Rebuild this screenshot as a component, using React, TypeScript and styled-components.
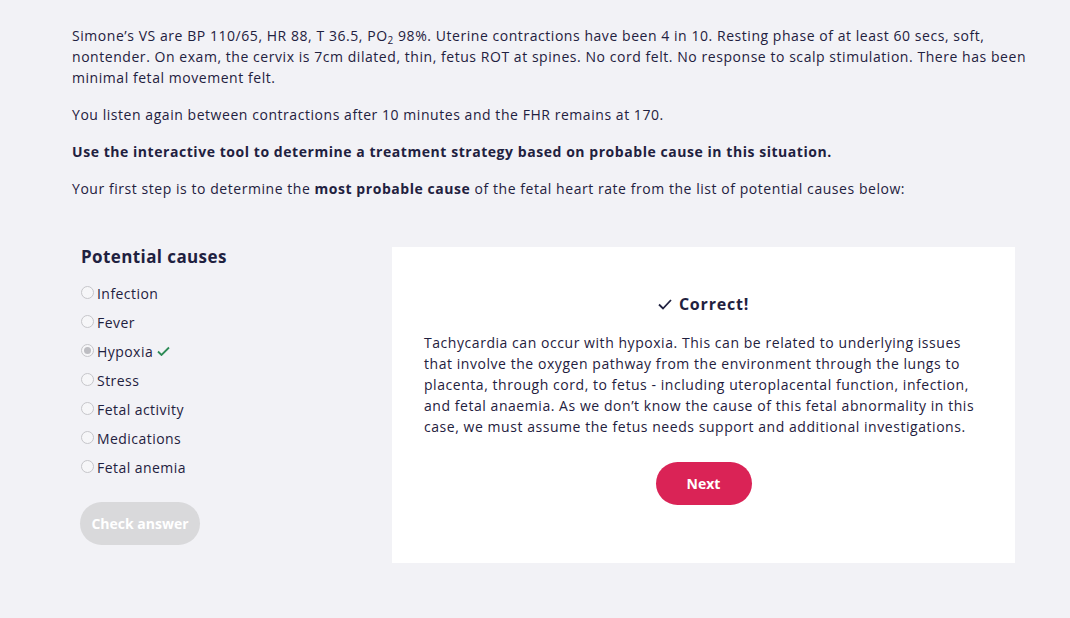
import React from "react";
import styled, { createGlobalStyle } from "styled-components";

const Global = createGlobalStyle`
  html, body { margin: 0; padding: 0; background: #f2f2f6; }
  body { font-family: "Open Sans", "Liberation Sans", sans-serif; color: #1f2140; }
`;

const Page = styled.div`
  width: 1070px;
  height: 618px;
  box-sizing: border-box;
  padding: 25px 40px 0 72px;
  background: #f2f2f6;
`;

const P = styled.p<{ $bold?: boolean }>`
  margin: 0 0 16px;
  font-size: 14px;
  line-height: 21px;
  font-weight: ${(p) => (p.$bold ? 700 : 400)};
  letter-spacing: 0.55px;
`;

const Sub = styled.span`
  display: inline-block;
  font-size: 10px;
  line-height: 10px;
  vertical-align: -3px;
`;

const Tool = styled.div`
  display: flex;
  margin-top: 46px;
`;

const Left = styled.div`
  width: 320px;
  padding: 0 0 0 9px;
  box-sizing: border-box;
`;

const Heading = styled.h3`
  margin: 0 0 10px;
  font-size: 17px;
  line-height: 24px;
  font-weight: 700;
  letter-spacing: 0.4px;
`;

const Option = styled.label`
  display: flex;
  align-items: center;
  height: 29px;
  font-size: 14px;
  letter-spacing: 0.45px;
`;

const Radio = styled.span<{ $checked?: boolean }>`
  width: 11px;
  height: 11px;
  border: 1px solid #c6c6ca;
  border-radius: 50%;
  background: #f6f6f8;
  margin-right: 3px;
  margin-top: -3px;
  display: flex;
  align-items: center;
  justify-content: center;
  &::after {
    content: "";
    display: ${(p) => (p.$checked ? "block" : "none")};
    width: 7px;
    height: 7px;
    border-radius: 50%;
    background: #bdbdc2;
  }
`;

const Tick = styled.svg`
  margin-left: 4px;
  margin-top: -2px;
`;

const CheckButton = styled.button`
  margin-top: 20px;
  width: 120px;
  height: 43px;
  border: none;
  border-radius: 22px;
  background: #d9d9db;
  color: #fff;
  font-family: inherit;
  font-weight: 700;
  font-size: 14px;
  margin-left: -1px;
`;

const Panel = styled.div`
  width: 623px;
  height: 316px;
  margin-top: 2px;
  background: #fff;
  box-sizing: border-box;
  padding: 45px 32px 0 32px;
  display: flex;
  flex-direction: column;
  align-items: center;
`;

const PanelTitle = styled.div`
  display: flex;
  align-items: center;
  gap: 7px;
  font-size: 16px;
  font-weight: 700;
  line-height: 24px;
  letter-spacing: 0.8px;
  margin-bottom: 16px;
`;

const PanelText = styled.p`
  margin: 0;
  font-size: 14px;
  line-height: 21px;
  letter-spacing: 0.55px;
  align-self: stretch;
`;

const NextButton = styled.button`
  margin-top: 25px;
  width: 96px;
  height: 43px;
  border: none;
  border-radius: 22px;
  background: #da2356;
  color: #fff;
  font-family: inherit;
  font-weight: 700;
  font-size: 14px;
`;

const causes = [
  "Infection",
  "Fever",
  "Hypoxia",
  "Stress",
  "Fetal activity",
  "Medications",
  "Fetal anemia",
];

export default function App() {
  return (
    <Page>
      <Global />
      <P>
        Simone’s VS are BP 110/65, HR 88, T 36.5, PO<Sub>2</Sub> 98%. Uterine contractions have been 4 in 10. Resting
        phase of at least 60 secs, soft, nontender. On exam, the cervix is 7cm dilated, thin, fetus ROT at spines. No
        cord felt. No response to scalp stimulation. There has been minimal fetal movement felt.
      </P>
      <P>You listen again between contractions after 10 minutes and the FHR remains at 170.</P>
      <P $bold>Use the interactive tool to determine a treatment strategy based on probable cause in this situation.</P>
      <P>
        Your first step is to determine the <b>most probable cause</b> of the fetal heart rate from the list of potential
        causes below:
      </P>
      <Tool>
        <Left>
          <Heading>Potential causes</Heading>
          {causes.map((c) => (
            <Option key={c}>
              <Radio $checked={c === "Hypoxia"} />
              {c}
              {c === "Hypoxia" && (
                <Tick width="13" height="10" viewBox="0 0 13 10">
                  <path d="M1 5.5 L4.5 9 L12 1.5" fill="none" stroke="#2e8b57" strokeWidth="1.8" />
                </Tick>
              )}
            </Option>
          ))}
          <CheckButton disabled>Check answer</CheckButton>
        </Left>
        <Panel>
          <PanelTitle>
            <svg width="14" height="11" viewBox="0 0 14 11">
              <path d="M1 5.5 L5 9.5 L13 1" fill="none" stroke="#1f2140" strokeWidth="1.8" />
            </svg>
            Correct!
          </PanelTitle>
          <PanelText>
            Tachycardia can occur with hypoxia. This can be related to underlying issues that involve the oxygen pathway
            from the environment through the lungs to placenta, through cord, to fetus - including uteroplacental
            function, infection, and fetal anaemia. As we don’t know the cause of this fetal abnormality in this case, we
            must assume the fetus needs support and additional investigations.
          </PanelText>
          <NextButton>Next</NextButton>
        </Panel>
      </Tool>
    </Page>
  );
}
